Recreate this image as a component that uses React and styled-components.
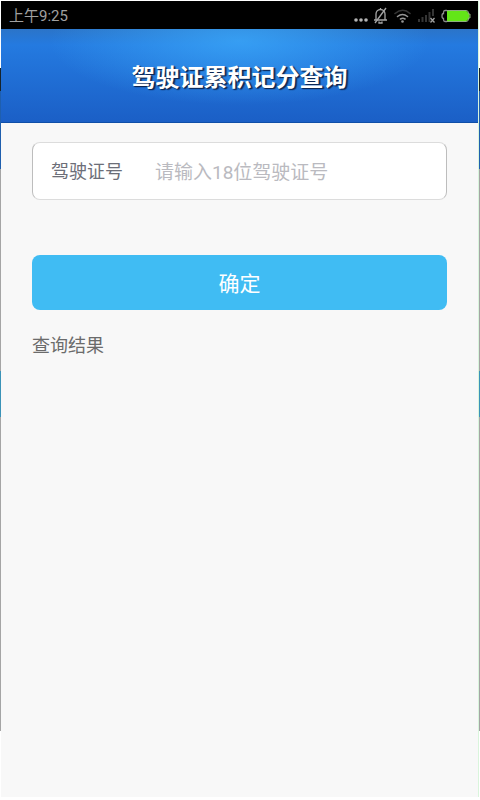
import React, { useState } from 'react'
import styled, { createGlobalStyle } from 'styled-components'

const GlobalStyle = createGlobalStyle`
  * {
    box-sizing: border-box;
  }
  body {
    margin: 0;
    background: #fff;
    font-family: Roboto, 'Noto Sans CJK SC', sans-serif;
  }
`

// the page underneath, which shows as a thin strip beside the screen
const Backdrop = styled.div`
  display: flex;
  min-height: 100vh;
  padding: 1px 1px 3px 1px;
  background: linear-gradient(
    #fff 68px,
    #16242c 68px 91px,
    #1f5fae 91px 169px,
    #a5a5a5 169px 371px,
    #3a93b8 371px 417px,
    #a5a5a5 417px 731px,
    #fff 731px
  );
`

const Screen = styled.div`
  display: flex;
  flex: 1;
  flex-direction: column;
  background: #f8f8f8;
  border-right: 1px solid #d9f5dc;
`

const StatusBar = styled.div`
  align-items: center;
  background: #000;
  color: #a0a0a0;
  display: flex;
  font-size: 15px;
  height: 28px;
  justify-content: space-between;
  line-height: 28px;
  padding: 2px 6px 0 8px;
`

const StatusIcons = styled.div`
  display: flex;
  svg {
    display: block;
  }
`

const Header = styled.header`
  align-items: center;
  background:
    radial-gradient(ellipse 190px 64px at 50% 12px, rgba(60, 170, 250, 0.75), rgba(60, 170, 250, 0)),
    linear-gradient(#2b74c8 0, #247ae0 16px, #1b5fc6 100%);
  border-bottom: 1px solid #0f4fa8;
  display: flex;
  height: 94px;
  justify-content: center;
  padding-top: 4px;
`

const Title = styled.h1`
  color: #fff;
  font-size: 24px;
  font-weight: 700;
  line-height: 32px;
  margin: 0;
  text-shadow: 1px 1px 1px #0c2550, 2px 1px 1px rgba(10, 25, 60, 0.7);
`

const Form = styled.form`
  display: flex;
  flex-direction: column;
  padding: 19px 31px 0;
`

const Field = styled.div`
  align-items: center;
  background: #fff;
  border: 1px solid #dcdcdc;
  border-left-color: #bdbdbd;
  border-right-color: #bdbdbd;
  border-radius: 8px;
  display: flex;
  gap: 32px;
  height: 58px;
  margin-bottom: 55px;
  padding: 2px 18px 0;
`

const Label = styled.label`
  color: #6c6e78;
  flex-shrink: 0;
  font-size: 18px;
  line-height: 28px;
`

const Input = styled.input`
  background: transparent;
  border: 0;
  color: #6c6e78;
  flex: 1;
  font-family: inherit;
  font-size: 19px;
  height: 28px;
  min-width: 0;
  outline: 0;
  padding: 0;
  &::placeholder {
    color: #babac0;
    opacity: 1;
  }
`

const SubmitButton = styled.button`
  background: #40bcf3;
  border: 0;
  border-radius: 8px;
  color: #fff;
  cursor: pointer;
  font-family: inherit;
  font-size: 21px;
  height: 55px;
  line-height: 32px;
  padding: 2px 0 0;
`

const ResultTitle = styled.h2`
  color: #6b6b6b;
  font-size: 18px;
  font-weight: 400;
  line-height: 28px;
  margin: 22px 31px 0;
`

const DeviceIcons = () => (
  <svg width='119' height='20' viewBox='0 0 119 20' fill='none' aria-hidden='true'>
    <g fill='#b4b4b4'>
      <circle cx='3' cy='14' r='1.8' />
      <circle cx='8' cy='14' r='1.8' />
      <circle cx='13' cy='14' r='1.8' />
    </g>
    <g stroke='#a6a6a6' strokeWidth='1.3'>
      <path d='M21 14h13M23 13.500V8a4.500 4.500 0 0 1 9 0v5.500M26 15.500v1.500h3v-1.500M27.500 3.500V2' />
      <path d='M33 2 22 17' />
    </g>
    <g transform='translate(2 0)'>
      <g strokeLinecap='round' strokeWidth='1.6'>
        <path d='M40 7.500q8-6.500 15 0' stroke='#363636' />
        <path d='M42.500 10.500q5-4 10 0' stroke='#969696' />
        <path d='M45.500 13q2.500-1.500 4.500 0' stroke='#969696' />
      </g>
      <circle cx='47.500' cy='15.500' r='1.300' fill='#969696' />
    </g>
    <g transform='translate(1 0)'>
      <path
        d='M65 16v-3M68.500 16v-5M72 16V9M75.500 16V6M79 10V3'
        stroke='#353535'
        strokeWidth='2'
      />
      <path d='m76.500 12 4 4.500m0-4.500-4 4.500' stroke='#a0a0a0' strokeWidth='1.300' />
    </g>
    <path
      d='M94 4.500h-2q-1.500 0-1.500 2v1q-1.500 0-1.500 2.500t1.500 2.500v1q0 2 1.500 2h2'
      stroke='#8c8c8c'
      strokeWidth='1.300'
    />
    <path d='M94 5h19q2 0 2 2v1h1.500v4H115v1q0 2-2 2H94V7z' fill='#63e617' />
    <path d='M94 4.500h19q2.500 0 2.500 2.500v1h1.500v4h-1.500v1q0 2.500-2.500 2.500H94' stroke='#8fae80' />
  </svg>
)

const App = () => {
  const [licence, setLicence] = useState('')

  return (
    <Backdrop>
      <GlobalStyle />
      <Screen>
        <StatusBar>
          <span>上午9:25</span>
          <StatusIcons>
            <DeviceIcons />
          </StatusIcons>
        </StatusBar>

        <Header>
          <Title>驾驶证累积记分查询</Title>
        </Header>

        <main>
          <Form onSubmit={e => e.preventDefault()}>
            <Field>
              <Label htmlFor='licence'>驾驶证号</Label>
              <Input
                id='licence'
                type='text'
                maxLength={18}
                placeholder='请输入18位驾驶证号'
                value={licence}
                onChange={e => setLicence(e.target.value)}
              />
            </Field>
            <SubmitButton type='submit'>确定</SubmitButton>
          </Form>
          <ResultTitle>查询结果</ResultTitle>
        </main>
      </Screen>
    </Backdrop>
  )
}

export default App
